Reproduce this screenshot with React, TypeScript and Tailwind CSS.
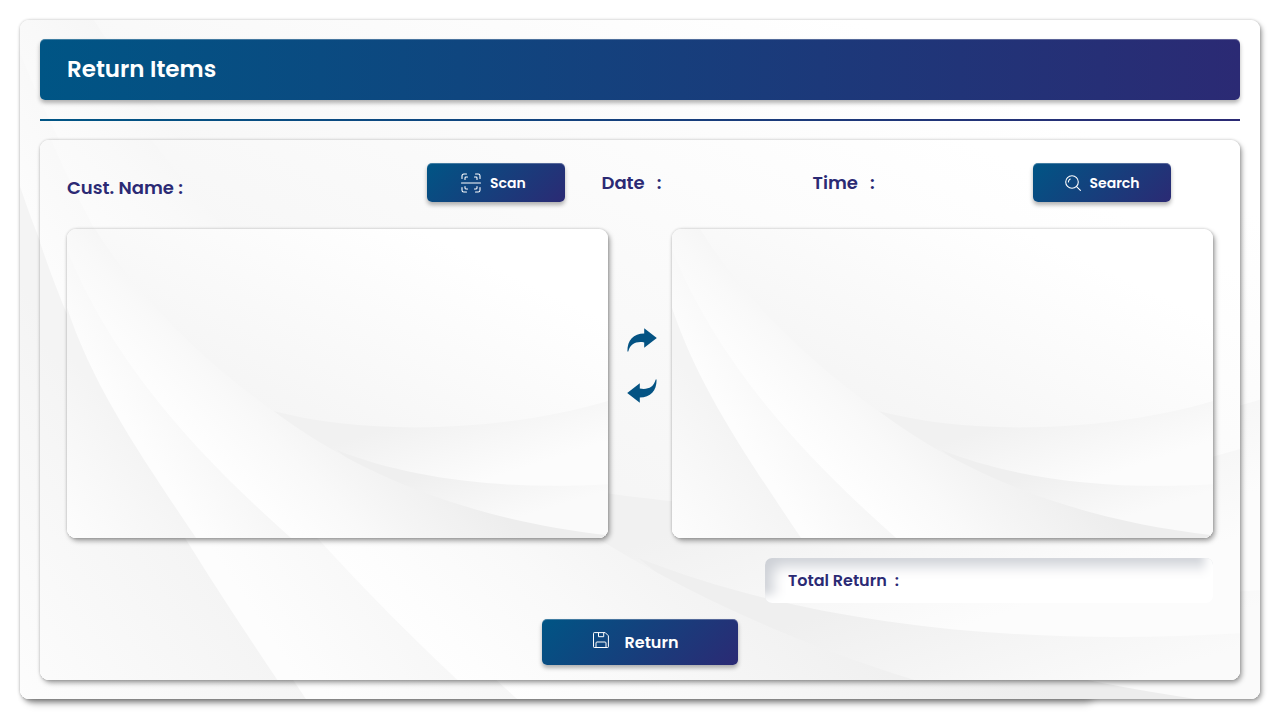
import type { ReactNode } from "react";

function Waves({ id }: { id: string }) {
  return (
    <svg
      className="absolute inset-0 -z-10 h-full w-full rounded-[inherit]"
      viewBox="0 0 540 309"
      preserveAspectRatio="xMidYMid slice"
      aria-hidden="true"
    >
      <defs>
        <linearGradient id={`${id}-sky`} gradientUnits="userSpaceOnUse" x1="370" y1="10" x2="250" y2="260">
          <stop offset="0" stopColor="#ffffff" />
          <stop offset="0.75" stopColor="#f6f6f6" />
          <stop offset="1" stopColor="#f4f4f4" />
        </linearGradient>
        <linearGradient id={`${id}-upper`} gradientUnits="userSpaceOnUse" x1="360" y1="185" x2="385" y2="262">
          <stop offset="0" stopColor="#f1f1f1" />
          <stop offset="1" stopColor="#fcfcfc" />
        </linearGradient>
        <linearGradient id={`${id}-lower`} gradientUnits="userSpaceOnUse" x1="380" y1="238" x2="400" y2="304">
          <stop offset="0" stopColor="#efefef" />
          <stop offset="1" stopColor="#fafafa" />
        </linearGradient>
        <linearGradient id={`${id}-wide`} gradientUnits="userSpaceOnUse" x1="170" y1="260" x2="290" y2="140">
          <stop offset="0" stopColor="#fefefe" />
          <stop offset="0.35" stopColor="#f9f9f9" />
          <stop offset="0.55" stopColor="#f5f5f5" />
          <stop offset="1" stopColor="#ededed" />
        </linearGradient>
        <linearGradient id={`${id}-mid`} gradientUnits="userSpaceOnUse" x1="75" y1="215" x2="150" y2="165">
          <stop offset="0" stopColor="#fdfdfd" />
          <stop offset="1" stopColor="#f4f4f4" />
        </linearGradient>
        <linearGradient id={`${id}-edge`} gradientUnits="userSpaceOnUse" x1="0" y1="310" x2="90" y2="245">
          <stop offset="0" stopColor="#fdfdfd" />
          <stop offset="1" stopColor="#f4f4f4" />
        </linearGradient>
      </defs>
      <rect width="540" height="309" fill={`url(#${id}-sky)`} />
      <path d="M206 182C300 207 435 203 540 172V309H380Z" fill={`url(#${id}-upper)`} />
      <path d="M269 221C345 251 440 261 540 255V309H380Z" fill={`url(#${id}-lower)`} />
      <path d="M0 0H28C66 62 130 128 206 182C292 246 400 290 540 306V309H0Z" fill={`url(#${id}-wide)`} />
      <path d="M0 21C45 132 126 222 224 309H0Z" fill={`url(#${id}-mid)`} />
      <path d="M0 79C27 160 76 230 129 309H0Z" fill={`url(#${id}-edge)`} />
    </svg>
  );
}

function ScanIcon() {
  return (
    <svg className="h-5 w-5" viewBox="0 0 20 20" fill="none" stroke="white" strokeWidth="1.1" strokeLinecap="round" strokeLinejoin="round" aria-hidden="true">
      <path d="M1 5.500V2.800A1.800 1.800 0 0 1 2.800 1H5.500M14.500 1H17.200A1.800 1.800 0 0 1 19 2.800V5.500M1 14.500V17.200A1.800 1.800 0 0 0 2.800 19H5.500M14.500 19H17.200A1.800 1.800 0 0 0 19 17.200V14.500" />
      <path d="M4 6.500V4.900A.9.9 0 0 1 4.900 4H6.500M13.500 4H15.100A.9.9 0 0 1 16 4.900V6.500M4 13.500V15.100A.9.9 0 0 0 4.900 16H6.500M13.500 16H15.100A.9.9 0 0 0 16 15.100V13.500M.5 10H19.500" />
    </svg>
  );
}

function SearchIcon() {
  return (
    <svg className="h-4 w-4" viewBox="0 0 16 16" fill="none" stroke="white" strokeWidth="1.1" strokeLinecap="round" aria-hidden="true">
      <circle cx="7" cy="7" r="6.300" />
      <path d="m11.600 11.600 3.800 3.800M3.400 7A3.600 3.600 0 0 1 5.200 4" />
    </svg>
  );
}

function SaveIcon() {
  return (
    <svg className="-mt-1 h-4 w-4" viewBox="0 0 16 16" fill="none" stroke="white" strokeWidth="1" strokeLinejoin="round" aria-hidden="true">
      <path d="M1.200.6h11l3.200 3.200v11a.7.7 0 0 1-.7.7H1.200a.7.7 0 0 1-.7-.7V1.300a.7.7 0 0 1 .7-.7Z" />
      <path d="M5.500.8v3.900h5.200V.8M3 15.300v-4.300a1 1 0 0 1 1-1h8a1 1 0 0 1 1 1v4.300" />
    </svg>
  );
}

function MoveArrow({ flipped = false }: { flipped?: boolean }) {
  return (
    <svg className={flipped ? "h-6 w-[30px] rotate-180" : "h-6 w-[30px]"} viewBox="0 0 30 24" fill="#045383" aria-hidden="true">
      <path d="M17.200.3 29.800 10 17.200 19.700v-5.300C9 13.200 3.500 15.500 1.300 23.500H.4C.3 12 6.500 5.600 17.200 5.500Z" />
    </svg>
  );
}

function ActionButton({ className, children }: { className: string; children: ReactNode }) {
  return (
    <button
      type="button"
      className={`flex items-center rounded-[5px] bg-linear-135/srgb from-[#005585] to-[#2b2a74] font-semibold text-white shadow-[inset_0_1px_0_rgba(255,255,255,0.25),0_3px_4px_rgba(0,0,0,0.3)] ${className}`}
    >
      {children}
    </button>
  );
}

const raised = "relative isolate rounded-[9px] shadow-[2px_3px_5px_rgba(0,0,0,0.35),0_0_3px_rgba(0,0,0,0.22)]";

export default function App() {
  return (
    <div className="relative isolate h-[720px] w-[1280px] overflow-hidden bg-white p-5 font-['Poppins','Inter',sans-serif] text-[#2b2a74]">
      <div className="absolute top-10 left-[26px] -z-10 h-[659px] w-[1068px] rounded-[9px] shadow-[0_4px_8px_rgba(0,0,0,0.25)]" />
      <main className={`${raised} flex h-[679px] flex-col px-5 pt-[19px]`}>
        <Waves id="page" />
        <header className="flex h-[61px] shrink-0 items-center rounded-[5px] bg-linear-to-r/srgb from-[#005585] to-[#2b2a74] pl-[27px] shadow-[inset_0_1px_0_rgba(255,255,255,0.25),0_3px_4px_rgba(0,0,0,0.3)]">
          <h1 className="text-[23px] font-semibold text-white">Return Items</h1>
        </header>
        <div className="mt-[19px] h-[2px] shrink-0 bg-linear-to-r/srgb from-[#005585] to-[#2b2a74]" />
        <section className={`${raised} mt-[19px] flex h-[540px] shrink-0 flex-col pt-[23px] pl-[27px]`}>
          <Waves id="card" />
          <div className="grid h-[39px] grid-cols-[360px_174.500px_211px_220.500px_138px] items-center text-[18px] font-semibold">
            <span className="pt-[9px]">Cust. Name :</span>
            <ActionButton className="h-[39px] w-[138px] gap-[9px] pl-[34px] text-[14px]">
              <ScanIcon />
              <span className="pt-px">Scan</span>
            </ActionButton>
            <span className="flex gap-3"><span>Date</span><span>:</span></span>
            <span className="flex gap-3"><span>Time</span><span>:</span></span>
            <ActionButton className="h-[39px] w-[138px] gap-[9px] pl-[31.500px] text-[14px]">
              <SearchIcon />
              <span className="pt-px">Search</span>
            </ActionButton>
          </div>
          <div className="mt-[27px] flex h-[309px]">
            <div className={`${raised} w-[541px]`}>
              <Waves id="left" />
            </div>
            <div className="flex w-[64px] flex-col items-center gap-[27px] pt-[99px] pl-[4px]">
              <MoveArrow />
              <MoveArrow flipped />
            </div>
            <div className={`${raised} w-[541px]`}>
              <Waves id="right" />
            </div>
          </div>
          <div className="mt-5 ml-[698px] flex h-[45px] w-[448px] items-center gap-2 rounded-[7px] bg-white pl-[23px] text-[16px] font-semibold shadow-[inset_-8px_-8px_10px_#ffffff,inset_8px_8px_14px_#cdd0d6]">
            <span>Total Return</span>
            <span>:</span>
          </div>
          <ActionButton className="mt-[16px] ml-[475px] h-[46px] w-[196px] gap-[15.500px] pl-[51px] text-[16px]">
            <SaveIcon />
            <span className="pt-px">Return</span>
          </ActionButton>
        </section>
      </main>
    </div>
  );
}
